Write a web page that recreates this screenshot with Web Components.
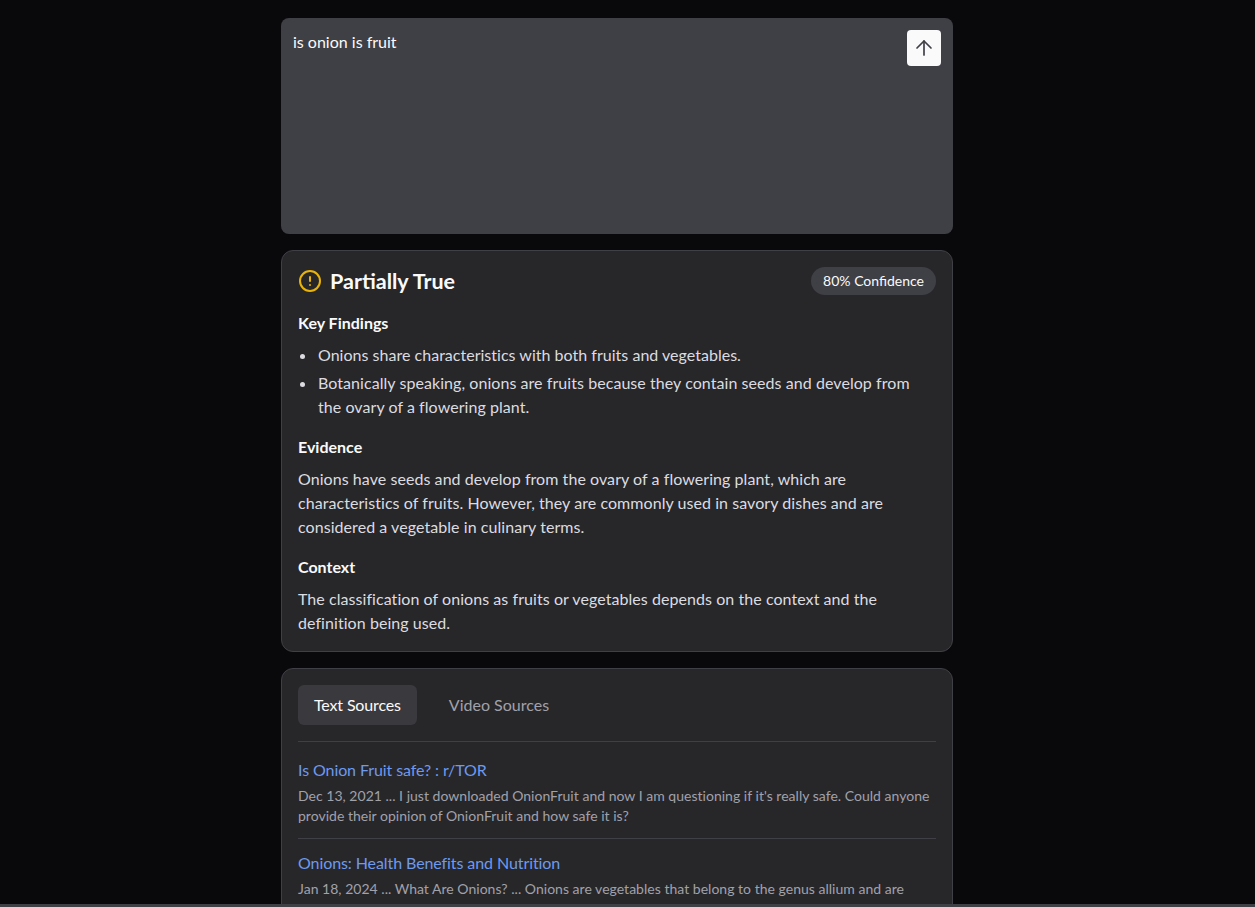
<!DOCTYPE html>
<html>
<head>
<meta charset="utf-8">
<style>
    html, body { margin: 0; height: 100%; }
    body {
        background: #09090b;
        color: #dcdce0;
        font-family: Lato, "Noto Sans", sans-serif;
        font-size: 16px;
        line-height: 24px;
        overflow: hidden;
    }
    finding-list li {
        display: flex;
        align-items: flex-start;
    }
    finding-list li::before {
        content: "";
        flex: none;
        width: 5px;
        height: 5px;
        margin: 11px 13px 0 -18px;
        border-radius: 50%;
        background: #dcdce0;
    }
    finding-list li:first-child { letter-spacing: 0.02px; }
</style>
</head>
<body>
<app-shell>
    <query-box text="is onion is fruit"></query-box>
    <verdict-card verdict="Partially True" confidence="80% Confidence">
        <result-section heading="Key Findings">
            <finding-list>
                <li>Onions share characteristics with both fruits and vegetables.</li>
                <li>Botanically speaking, onions are fruits because they contain seeds and develop from the ovary of a flowering plant.</li>
            </finding-list>
        </result-section>
        <result-section heading="Evidence">Onions have seeds and develop from the ovary of a flowering plant, which are characteristics of fruits. However, they are commonly used in savory dishes and are considered a vegetable in culinary terms.</result-section>
        <result-section heading="Context">The classification of onions as fruits or vegetables depends on the context and the definition being used.</result-section>
    </verdict-card>
    <sources-card>
        <source-item title="Is Onion Fruit safe? : r/TOR">Dec 13, 2021 ... I just downloaded OnionFruit and now I am questioning if it's really safe. Could anyone provide their opinion of OnionFruit and how safe it is?</source-item>
        <source-item title="Onions: Health Benefits and Nutrition">Jan 18, 2024 ... What Are Onions? ... Onions are vegetables that belong to the genus allium and are</source-item>
    </sources-card>
</app-shell>

<script>
class appShell extends HTMLElement {
    constructor() {
        super();
        this.attachShadow({ mode: 'open' });
    }
    connectedCallback() {
        this.shadowRoot.innerHTML = `
            <style>
                :host {
                    display: flex;
                    flex-direction: column;
                    height: 100vh;
                }
                .page {
                    flex: 1;
                    min-height: 0;
                    overflow: hidden;
                    padding-right: 21px;
                }
                main {
                    width: 672px;
                    margin: 0 auto;
                    padding-top: 18px;
                    display: flex;
                    flex-direction: column;
                    gap: 16px;
                }
                .bar {
                    flex: none;
                    height: 3px;
                    background: #3f3f46;
                }
            </style>
            <div class="page"><main><slot></slot></main></div>
            <div class="bar"></div>
        `;
    }
}

class queryBox extends HTMLElement {
    constructor() {
        super();
        this.attachShadow({ mode: 'open' });
    }
    connectedCallback() {
        this.shadowRoot.innerHTML = `
            <style>
                :host {
                    display: flex;
                    justify-content: space-between;
                    align-items: flex-start;
                    box-sizing: border-box;
                    height: 216px;
                    padding: 12px;
                    background: #3f3f46;
                    border-radius: 8px;
                    color: #fafafa;
                }
                button {
                    display: flex;
                    align-items: center;
                    justify-content: center;
                    width: 34px;
                    height: 36px;
                    padding: 0;
                    border: 0;
                    border-radius: 4px;
                    background: #fafafa;
                }
            </style>
            <span>${this.getAttribute('text')}</span>
            <button>
                <svg width="24" height="24" viewBox="0 0 24 24" fill="none" stroke="#3f3f46" stroke-width="1.7" stroke-linecap="round" stroke-linejoin="round">
                    <path d="m5 12 7-7 7 7"/>
                    <path d="M12 19V5"/>
                </svg>
            </button>
        `;
    }
}

class verdictCard extends HTMLElement {
    constructor() {
        super();
        this.attachShadow({ mode: 'open' });
    }
    connectedCallback() {
        this.shadowRoot.innerHTML = `
            <style>
                :host {
                    display: flex;
                    flex-direction: column;
                    gap: 16px;
                    padding: 16px;
                    background: #27272a;
                    border: 1px solid #3f3f46;
                    border-radius: 12px;
                }
                header {
                    display: flex;
                    justify-content: space-between;
                    align-items: center;
                }
                .verdict {
                    display: flex;
                    align-items: center;
                    gap: 8px;
                    font-size: 21.5px;
                    font-weight: 700;
                    line-height: 28px;
                    color: #fafafa;
                }
                .pill {
                    padding: 0 12px;
                    background: #3f3f46;
                    border-radius: 14px;
                    font-size: 14px;
                    line-height: 28px;
                    color: #fafafa;
                }
            </style>
            <header>
                <div class="verdict">
                    <svg width="24" height="24" viewBox="0 0 24 24" fill="none" stroke="#eab308" stroke-width="2" stroke-linecap="round" stroke-linejoin="round">
                        <circle cx="12" cy="12" r="10"/>
                        <path d="M12 8v4"/>
                        <path d="M12 16h.01"/>
                    </svg>
                    <span>${this.getAttribute('verdict')}</span>
                </div>
                <span class="pill">${this.getAttribute('confidence')}</span>
            </header>
            <slot></slot>
        `;
    }
}

class resultSection extends HTMLElement {
    constructor() {
        super();
        this.attachShadow({ mode: 'open' });
    }
    connectedCallback() {
        this.shadowRoot.innerHTML = `
            <style>
                :host {
                    display: flex;
                    flex-direction: column;
                    gap: 8px;
                }
                h3 {
                    margin: 0;
                    font-size: 16px;
                    font-weight: 700;
                    line-height: 24px;
                    color: #fafafa;
                }
                .body {
                    letter-spacing: 0.06px;
                }
            </style>
            <h3>${this.getAttribute('heading')}</h3>
            <div class="body"><slot></slot></div>
        `;
    }
}

class findingList extends HTMLElement {
    constructor() {
        super();
        this.attachShadow({ mode: 'open' });
    }
    connectedCallback() {
        this.shadowRoot.innerHTML = `
            <style>
                :host {
                    display: flex;
                    flex-direction: column;
                    gap: 4px;
                    padding-left: 20px;
                }
            </style>
            <slot></slot>
        `;
    }
}

class sourcesCard extends HTMLElement {
    constructor() {
        super();
        this.attachShadow({ mode: 'open' });
    }
    connectedCallback() {
        this.shadowRoot.innerHTML = `
            <style>
                :host {
                    display: block;
                    padding: 16px;
                    background: #27272a;
                    border: 1px solid #3f3f46;
                    border-radius: 12px;
                }
                nav {
                    display: flex;
                    gap: 16px;
                    padding-bottom: 16px;
                    margin-bottom: 4px;
                    border-bottom: 1px solid #3f3f46;
                }
                span {
                    padding: 0 16px;
                    line-height: 40px;
                    border-radius: 6px;
                    color: #a1a1aa;
                }
                span.active {
                    background: #3a3a3e;
                    color: #fafafa;
                    letter-spacing: -0.15px;
                }
            </style>
            <nav>
                <span class="active">Text Sources</span>
                <span>Video Sources</span>
            </nav>
            <slot></slot>
        `;
    }
}

class sourceItem extends HTMLElement {
    constructor() {
        super();
        this.attachShadow({ mode: 'open' });
    }
    connectedCallback() {
        this.shadowRoot.innerHTML = `
            <style>
                :host {
                    display: block;
                    padding: 12px 0;
                    border-bottom: 1px solid #3f3f46;
                }
                a {
                    display: block;
                    margin-bottom: 4px;
                    color: #6d9aef;
                    text-decoration: none;
                    letter-spacing: -0.09px;
                }
                p {
                    margin: 0;
                    font-size: 14px;
                    line-height: 20px;
                    color: #a1a1aa;
                    letter-spacing: 0.02px;
                }
            </style>
            <a href="#">${this.getAttribute('title')}</a>
            <p><slot></slot></p>
        `;
    }
}

customElements.define('app-shell', appShell);
customElements.define('query-box', queryBox);
customElements.define('verdict-card', verdictCard);
customElements.define('result-section', resultSection);
customElements.define('finding-list', findingList);
customElements.define('sources-card', sourcesCard);
customElements.define('source-item', sourceItem);
</script>
</body>
</html>
